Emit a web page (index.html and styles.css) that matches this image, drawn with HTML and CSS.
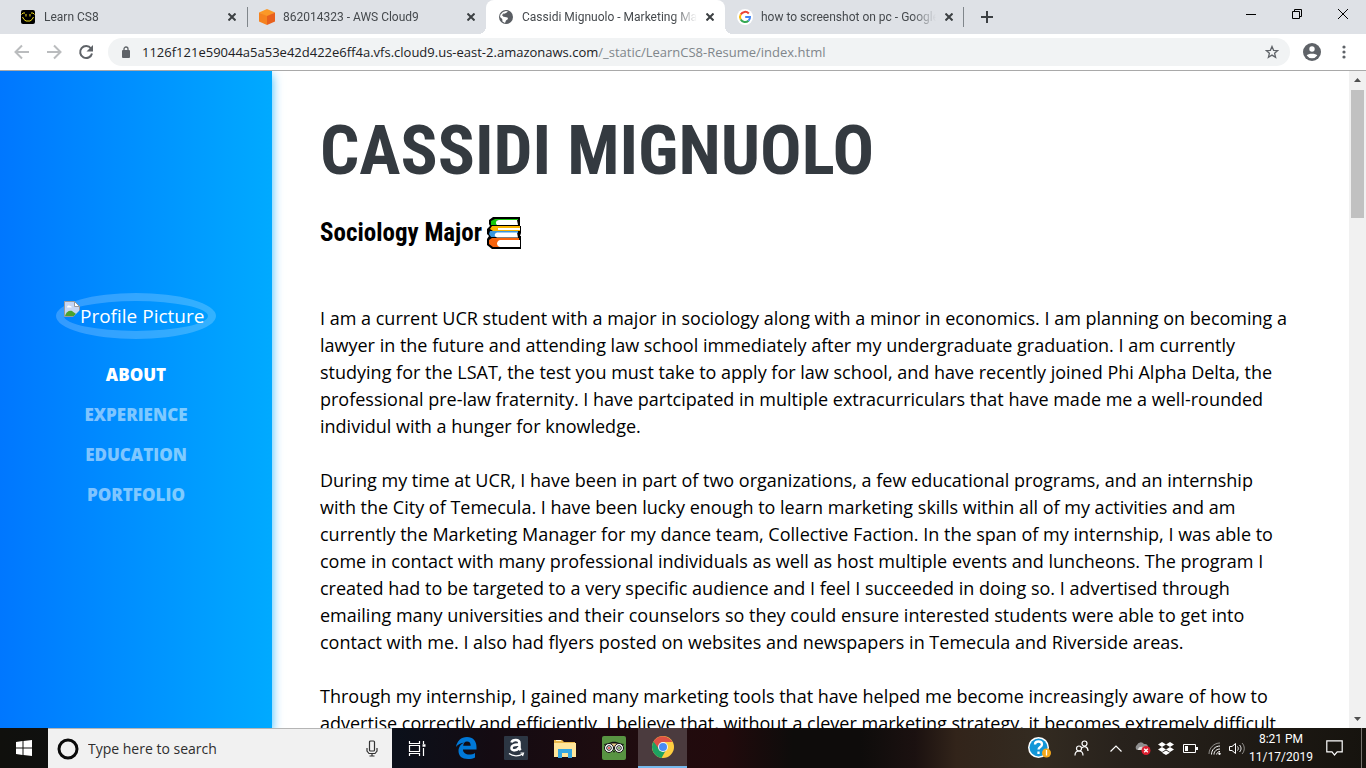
FILE: index.html
```html
<!DOCTYPE html>
<html lang="en">
<head>
<meta charset="utf-8">
<title>Cassidi Mignuolo - Marketing Manager</title>
<link rel="stylesheet" href="styles.css">
</head>
<body>
<header class="browser">
  <div class="tabstrip">
    <div class="tab">
      <svg class="favicon" viewBox="0 0 16 16"><rect x="1" y="1" width="14" height="14" rx="2" fill="#000"/><path d="M6 5v2.500M10 5v2.500M1.500 5.500L3 4h2M14.500 5.500L13 4h-2M2.500 8L4 10.500 6 12h4l2-1.500L13.500 8" fill="none" stroke="#f4e01c" stroke-width="1"/></svg>
      <a class="tab-title" href="#">Learn CS8</a>
      <button class="tab-close" aria-label="Close tab"><svg viewBox="0 0 8 8"><path d="M.5.500l7 7M7.500.500l-7 7"/></svg></button>
    </div>
    <div class="tab divided">
      <svg class="favicon" viewBox="0 0 16 16"><path d="M8 0l8 3.500L8 8 0 3.500z" fill="#fb9827"/><path d="M0 3.500L8 7v9l-8-3.500z" fill="#f5821f"/><path d="M16 3.500L8 7v9l8-3.500z" fill="#e8601d"/></svg>
      <a class="tab-title" href="#">862014323 - AWS Cloud9</a>
      <button class="tab-close" aria-label="Close tab"><svg viewBox="0 0 8 8"><path d="M.5.500l7 7M7.500.500l-7 7"/></svg></button>
    </div>
    <div class="tab active">
      <svg class="favicon" viewBox="0 0 16 16"><circle cx="8" cy="8" r="7" fill="#5a5e63"/><path d="M10 2.500L8 4 5.500 5l-1 1.800L7 8l2.500.5L10 10l-2 1.500L7 14 4.500 12.500 4.200 10 2 8l.5-2.500L5 3l3-1z" fill="#fff"/><path d="M7.500 5.500l2-.5 1-2 2.500 2 .8 3-1.800.7-1.500-1.500L8 7z" fill="#5a5e63"/><path d="M6 4.500C4 6 4.500 7 6.500 7.500" fill="none" stroke="#5a5e63"/></svg>
      <a class="tab-title" href="#">Cassidi Mignuolo - Marketing Manager</a>
      <button class="tab-close" aria-label="Close tab"><svg viewBox="0 0 8 8"><path d="M.5.500l7 7M7.500.500l-7 7"/></svg></button>
    </div>
    <div class="tab last">
      <svg class="favicon" viewBox="0 0 16 16"><circle cx="8" cy="8" r="8" fill="#fff"/><g fill="none" stroke-width="2"><path d="M11.800 4.500A5 5 0 0 0 3.700 5.500" stroke="#ea4335"/><path d="M3.700 5.500a5 5 0 0 0 0 5" stroke="#fbbc05"/><path d="M3.700 10.500a5 5 0 0 0 7.800 1.200" stroke="#34a853"/><path d="M11.500 11.700A4.800 4.800 0 0 0 13 8H8.200" stroke="#4285f4"/></g></svg>
      <a class="tab-title" href="#">how to screenshot on pc - Google Search</a>
      <button class="tab-close" aria-label="Close tab"><svg viewBox="0 0 8 8"><path d="M.5.500l7 7M7.500.500l-7 7"/></svg></button>
    </div>
    <button class="new-tab" aria-label="New tab"><svg width="12" height="12" viewBox="0 0 12 12"><path d="M6 0v12M0 6h12" stroke="#3c4043" stroke-width="2"/></svg></button>
    <div class="window-buttons">
      <button aria-label="Minimize"><svg width="10" height="10" viewBox="0 0 10 10"><path d="M0 5.500h10"/></svg></button>
      <button aria-label="Restore"><svg width="10" height="10" viewBox="0 0 10 10"><path d="M.5 2.500h7v7h-7zM2.500 2.500v-2h7v7h-2"/></svg></button>
      <button aria-label="Close window"><svg width="10" height="10" viewBox="0 0 10 10"><path d="M0 0l10 10M10 0L0 10"/></svg></button>
    </div>
  </div>
  <div class="toolbar">
    <button class="tool" aria-label="Back"><svg width="16" height="16" viewBox="0 0 16 16"><path d="M15 8H2M8 1.500L1.500 8 8 14.500" fill="none" stroke="#babcbe" stroke-width="2"/></svg></button>
    <button class="tool" aria-label="Forward"><svg width="16" height="16" viewBox="0 0 16 16"><path d="M1 8h13M8 1.500L14.500 8 8 14.500" fill="none" stroke="#babcbe" stroke-width="2"/></svg></button>
    <button class="tool" aria-label="Reload"><svg width="16" height="16" viewBox="0 0 16 16"><path d="M13 4.500A6 6 0 1 0 14 9.500" fill="none" stroke="#5f6368" stroke-width="2"/><path d="M15 1v6.500H8.500z" fill="#5f6368"/></svg></button>
    <div class="omnibox">
      <svg width="10" height="12" viewBox="0 0 10 12"><rect x="1" y="4" width="8" height="8" rx="1" fill="#5f6368"/><path d="M3 5V3a2 2 0 0 1 4 0v2" fill="none" stroke="#5f6368" stroke-width="1.300"/></svg>
      <div class="url">1126f121e59044a5a53e42d422e6ff4a.vfs.cloud9.us-east-2.amazonaws.com<span class="path">/_static/LearnCS8-Resume/index.html</span></div>
      <button class="star" aria-label="Bookmark this page"><svg width="14" height="14" viewBox="0 0 14 14"><path d="M7 1.500l1.600 3.800 4.100.3-3.100 2.700 1 4L7 10.100l-3.600 2.200 1-4L1.300 5.600l4.100-.3z" fill="none" stroke="#5f6368" stroke-width="1.300"/></svg></button>
    </div>
    <button class="tool profile" aria-label="Profile"><svg width="18" height="18" viewBox="0 0 18 18"><circle cx="9" cy="9" r="9" fill="#5f6368"/><circle cx="9" cy="6" r="2.700" fill="#fff"/><path d="M3.700 12.500c1-2.200 9.600-2.200 10.600 0a6.500 6.500 0 0 1-10.600 0z" fill="#fff"/></svg></button>
    <button class="tool" aria-label="Menu"><svg width="4" height="14" viewBox="0 0 4 14" fill="#5f6368"><circle cx="2" cy="2" r="1.600"/><circle cx="2" cy="7" r="1.600"/><circle cx="2" cy="12" r="1.600"/></svg></button>
  </div>
</header>

<div class="page">
  <nav class="sidebar">
    <div class="portrait">
      <svg width="16" height="16" viewBox="0 0 16 16"><path d="M.5.500h10l5 5v5.500l-5 4.500H.5z" fill="#c5d6f5" stroke="#9a9a9a"/><path d="M10.500.500v5h5z" fill="#fff" stroke="#9a9a9a"/><path d="M3 6.500c0-2 2-2.500 3-1.500 1.500-.5 2 1 1.500 1.500z" fill="#fff"/><path d="M1 15c1-4 4-6 7-5l4 3-2 2z" fill="#4ca32f"/><path d="M9 16l7-7v7z" fill="#0089ff"/></svg><span>Profile Picture</span>
    </div>
    <ul class="menu">
      <li><a class="current" href="#about">About</a></li>
      <li><a href="#experience">Experience</a></li>
      <li><a href="#education">Education</a></li>
      <li><a href="#portfolio">Portfolio</a></li>
    </ul>
  </nav>
  <main class="content" id="about">
    <h1>Cassidi Mignuolo</h1>
    <h2><span>Sociology Major</span>
      <svg width="36" height="34" viewBox="0 0 36 34"><path d="M7 1h27v9h1v7l-1 3h1v13H6l-5-4v-6l2-3-2-2v-5l3-3-1-2V4z" fill="#000"/><path d="M9 3h23v1H11v5h-6V5z" fill="#16c60c"/><path d="M13 4h18l1 5H11c-2-2-1-5 2-5z" fill="#fff"/><path d="M6 10h28v2H12v2h22v1H7l-3-2z" fill="#fab400"/><path d="M12 12h22v2H12z" fill="#fff"/><path d="M4 15h28v2H11v4H5l-2-3z" fill="#3a96dd"/><path d="M11 16.500h20l1 5H11c-3-1-3-4 0-5z" fill="#fff"/><path d="M6 22h27v2H14v7H7l-4-3v-4z" fill="#f7630c"/><path d="M14 24h20v7H14c-4-1-4-6 0-7z" fill="#fff"/></svg>
    </h2>
    <p>I am a current UCR student with a major in sociology along with a minor in economics. I am planning on becoming a<br>lawyer in the future and attending law school immediately after my undergraduate graduation. I am currently<br>studying for the LSAT, the test you must take to apply for law school, and have recently joined Phi Alpha Delta, the<br>professional pre-law fraternity. I have partcipated in multiple extracurriculars that have made me a well-rounded<br>individul with a hunger for knowledge.</p>
    <p>During my time at UCR, I have been in part of two organizations, a few educational programs, and an internship<br>with the City of Temecula. I have been lucky enough to learn marketing skills within all of my activities and am<br>currently the Marketing Manager for my dance team, Collective Faction. In the span of my internship, I was able to<br>come in contact with many professional individuals as well as host multiple events and luncheons. The program I<br>created had to be targeted to a very specific audience and I feel I succeeded in doing so. I advertised through<br>emailing many universities and their counselors so they could ensure interested students were able to get into<br>contact with me. I also had flyers posted on websites and newspapers in Temecula and Riverside areas.</p>
    <p>Through my internship, I gained many marketing tools that have helped me become increasingly aware of how to<br>advertise correctly and efficiently. I believe that, without a clever marketing strategy, it becomes extremely difficult</p>
  </main>
  <div class="scrollbar">
    <svg width="17" height="17" viewBox="0 0 17 17"><path d="M5 11l3.500-4L12 11z" fill="#505050"/></svg>
    <div class="thumb"></div>
    <svg width="17" height="17" viewBox="0 0 17 17"><path d="M5 6l3.500 4L12 6z" fill="#505050"/></svg>
  </div>
</div>

<footer class="taskbar">
  <button class="start" aria-label="Start"><svg width="16" height="16" viewBox="0 0 16 16" fill="#fff"><path d="M0 2l6.500-1v6.500H0zM7.500.900L16 0v7.500H7.500zM0 8.500h6.500V15L0 14zM7.500 8.500H16V16l-8.500-1z"/></svg></button>
  <label class="search">
    <svg width="22" height="22" viewBox="0 0 22 22"><circle cx="11" cy="11" r="9" fill="none" stroke="#0a0a0a" stroke-width="3"/></svg>
    <input type="text" placeholder="Type here to search" aria-label="Type here to search">
    <svg width="12" height="17" viewBox="0 0 12 17" fill="none" stroke="#333" stroke-width="1.200"><rect x="3.500" y="1" width="5" height="10" rx="1"/><path d="M1 8v3l2 2.500h6l2-2.500V8M6 13.500V16M3.500 16h5"/></svg>
  </label>
  <button class="app view" aria-label="Task View"><svg width="18" height="18" viewBox="0 0 18 18" fill="none" stroke="#fff" stroke-width="1.200"><path d="M1.500 2v2.500h10V2M1.500 6.500h10v6h-10zM1.500 17v-2.500h10V17M15.500 2v3M15.500 9v8"/><path d="M14.500 6.500h3" stroke-width="2.500"/></svg></button>
  <button class="app" aria-label="Edge"><svg width="21" height="22" viewBox="0 0 21 22"><path d="M0 10C1 4 5 0 11 0c6 0 9.500 4 9.500 10v2.500H7c0 3.500 3 5 6 5 2.500 0 4.500-.6 6-1.600v4.600c-2 1-4 1.500-7 1.500-6 0-9.500-3-9.500-8C2.500 10 5 7 8 5.500 4 6 1.500 8 0 10zM7.200 8.800h7.500C14.700 6 13.500 4.500 11 4.500S7.500 6.300 7.200 8.800z" fill="#0078d7"/></svg></button>
  <button class="app" aria-label="Amazon"><svg width="24" height="24" viewBox="0 0 24 24"><rect width="24" height="24" rx="1" fill="#2c3643"/><path d="M7.500 6.500C8 4.500 10 4 11.800 4c2.700 0 3.700 1.200 3.700 3.300v4.200c0 1.500.5 2 1.200 2.700M15 8.700c-5-.3-7.500 1-7.500 3.300 0 3.300 5.500 3 7.300-.3" fill="none" stroke="#fff" stroke-width="2.600"/><path d="M5 17.500c4 3 10 3 13.500.5M16.500 17h3l-1 3" fill="none" stroke="#fff" stroke-width="1.200"/></svg></button>
  <button class="app" aria-label="File Explorer"><svg width="22" height="19" viewBox="0 0 22 19"><path d="M0 1h8l2 2h11v15H0z" fill="#e9b84c"/><path d="M2 1h5v1H2z" fill="#fff5cf"/><path d="M0 4h22v14H0z" fill="#ffe69a"/><path d="M4 19v-9h14v9h-4v-5H8v5z" fill="#35a7df"/></svg></button>
  <button class="app" aria-label="TripAdvisor"><svg width="24" height="24" viewBox="0 0 24 24"><rect width="24" height="24" rx="2" fill="#589442"/><path d="M2 8l4-.5C10 5 14 5 18 7.500l4 .5-2 3H4z" fill="#111"/><path d="M9 7.500h6L12 12z" fill="#eac98a"/><g fill="#fff" stroke="#111"><circle cx="7" cy="12" r="4.500"/><circle cx="17" cy="12" r="4.500"/><circle cx="7" cy="12" r="2.300"/><circle cx="17" cy="12" r="2.300"/></g><circle cx="7" cy="12" r="1" fill="#d33"/><circle cx="17" cy="12" r="1" fill="#589442"/><path d="M11 15h2l-1 2z" fill="#111"/></svg></button>
  <button class="app open" aria-label="Chrome"><svg width="22" height="22" viewBox="0 0 22 22"><circle cx="11" cy="11" r="11" fill="#ffcd40"/><path d="M11 11L1.500 5.500A11 11 0 0 0 9.500 21.900L14 14z" fill="#1da261"/><path d="M1.500 5.500a11 11 0 0 1 19 0.500H11L7 13z" fill="#dd5144"/><circle cx="11" cy="11" r="5" fill="#f4f4f4"/><circle cx="11" cy="11" r="4" fill="#4a8af4"/></svg></button>
  <div class="tray">
    <button class="help" aria-label="Help"><svg width="24" height="22" viewBox="0 0 24 22"><circle cx="10.500" cy="10.500" r="10.500" fill="#fff"/><circle cx="10.500" cy="10.500" r="9" fill="#1296d8"/><path d="M7 7.500C7 3.500 14 3.500 14 7.500c0 2.500-3.500 2.500-3.500 5M10.500 14.500v2.500" fill="none" stroke="#fff" stroke-width="2.300"/><circle cx="18.500" cy="16" r="4.500" fill="#f5a81c"/><path d="M18.500 13v5.500" stroke="#fff" stroke-width="1.300"/></svg></button>
    <button class="people" aria-label="People"><svg width="15" height="16" viewBox="0 0 15 16" fill="none" stroke="#fff" stroke-width="1.200"><circle cx="5" cy="8.500" r="2.500"/><path d="M1 15.500c0-6 8-6 8 0"/><circle cx="10.500" cy="3.500" r="2.500"/><path d="M8 8c2-2.500 6-1.500 6 3"/></svg></button>
    <button class="more" aria-label="Show hidden icons"><svg width="12" height="7" viewBox="0 0 12 7"><path d="M.5 6.500L6 1l5.500 5.500" fill="none" stroke="#fff" stroke-width="1.200"/></svg></button>
    <button aria-label="OneDrive"><svg width="17" height="14" viewBox="0 0 17 14"><path d="M3 9a3 3 0 0 1 0-5 4 4 0 0 1 7-1c3-.5 4 1 4 3v3z" fill="#8e8e8e"/><path d="M4 9c0-3 3-4 5-3 3-1 5 1 5 3z" fill="#ddd"/><circle cx="12" cy="9.500" r="4.500" fill="#dc1f30"/><path d="M10.200 7.700l3.600 3.600M13.800 7.700l-3.600 3.600" stroke="#fff" stroke-width="1.300"/></svg></button>
    <button aria-label="Dropbox"><svg width="16" height="13" viewBox="0 0 16 13" fill="#fff"><path d="M4 0l4 2.500L4 5 0 2.500zM12 0l4 2.500L12 5 8 2.500zM4 5l4 2.500L4 10 0 7.500zM12 5l4 2.500-4 2.500-4-2.500zM8 8.500l4 2.300L8 13l-4-2.200z"/></svg></button>
    <button aria-label="Battery"><svg width="15" height="9" viewBox="0 0 15 9"><path d="M.5.500h12v8H.5z" fill="none" stroke="#fff"/><path d="M13 3h2v3h-2zM2 2h3v5H2z" fill="#fff"/></svg></button>
    <button aria-label="Network"><svg width="13" height="13" viewBox="0 0 13 13" fill="none" stroke="#fff"><path d="M1 12C1 6 6 1 12 1" opacity=".5"/><path d="M3.500 12.500c0-5 4-8.500 8.500-8.500M6 12.500C6 9 9 7 12 7M8.700 12.500c0-1.500 1.500-3 3.300-3"/><circle cx="11.500" cy="11.800" r=".8" fill="#fff"/></svg></button>
    <button class="sound" aria-label="Volume"><svg width="17" height="13" viewBox="0 0 17 13" fill="none" stroke="#fff"><path d="M.5 4.500H3L6.500 1.500v10L3 8.500H.5zM8.500 4.500c1 1 1 3 0 4M10.500 3c2 2 2 5 0 7"/><path d="M13 1c3 3 3 8 0 11" opacity=".5"/></svg></button>
    <div class="clock"><span>8:21 PM</span><span>11/17/2019</span></div>
    <button class="notify" aria-label="Notifications"><svg width="17" height="16" viewBox="0 0 17 16"><path d="M.8.800h15.400v11h-5L8.500 15l-2.500-3.200H.8z" fill="none" stroke="#fff" stroke-width="1.200"/></svg></button>
    <button class="desktop" aria-label="Show desktop"></button>
  </div>
</footer>
</body>
</html>
```

FILE: styles.css
```css
* { box-sizing: border-box; }
body {
  margin: 0;
  height: 100vh;
  display: flex;
  flex-direction: column;
  overflow: hidden;
  font-family: Roboto, "Open Sans", sans-serif;
  font-size: 12px;
}
button {
  display: flex;
  align-items: center;
  justify-content: center;
  padding: 0;
  border: 0;
  background: none;
}
svg { display: block; flex: none; }
a { color: inherit; text-decoration: none; }

.browser { flex: none; border-bottom: 1px solid #a9a9a9; background: #fff; }
.tabstrip { display: flex; height: 34px; padding-left: 8px; background: #dee1e6; }
.tab {
  flex: 0 1 239px;
  min-width: 0;
  display: flex;
  align-items: center;
  padding: 0 11px 0 12px;
  color: #45494d;
  position: relative;
}
.divided::before, .last::after {
  content: "";
  position: absolute;
  left: 0;
  top: 7px;
  width: 1px;
  height: 20px;
  background: #80868b;
}
.last::after { left: auto; right: 0; }
.favicon { width: 16px; height: 16px; margin-right: 8px; }
.tab-title {
  flex: 1;
  min-width: 0;
  overflow: hidden;
  white-space: nowrap;
  -webkit-mask-image: linear-gradient(to right, #000 calc(100% - 24px), transparent);
  mask-image: linear-gradient(to right, #000 calc(100% - 24px), transparent);
}
.tab-close { width: 8px; height: 8px; margin-left: 9px; }
.tab-close svg { width: 8px; height: 8px; stroke: #3c4043; stroke-width: 2; }
.active { background: #fff; border-radius: 8px 8px 0 0; }
.active::before, .active::after {
  content: "";
  position: absolute;
  bottom: 0;
  width: 8px;
  height: 8px;
}
.active::before { left: -8px; background: radial-gradient(circle at 0 0, transparent 8px, #fff 8px); }
.active::after { right: -8px; background: radial-gradient(circle at 100% 0, transparent 8px, #fff 8px); }
.new-tab { width: 28px; margin-left: 9px; }
.window-buttons { display: flex; margin-left: auto; height: 28px; }
.window-buttons button { width: 46px; }
.window-buttons svg { fill: none; stroke: #000; }

.toolbar { display: flex; align-items: center; height: 36px; padding: 0 6px; }
.tool { width: 32px; height: 32px; }
.profile { margin-left: 6px; }
.omnibox {
  flex: 1;
  min-width: 0;
  display: flex;
  align-items: center;
  height: 28px;
  margin-left: 6px;
  padding: 0 11px 0 13px;
  border-radius: 14px;
  background: #f1f3f4;
}
.url {
  flex: 1;
  margin-left: 11px;
  font-family: "Open Sans", sans-serif;
  font-size: 13px;
  white-space: nowrap;
  overflow: hidden;
  color: #202124;
}
.path { color: #80868b; }

.page { flex: 1; min-height: 0; display: flex; background: #fff; overflow: hidden; }
.sidebar {
  flex: none;
  width: 272px;
  display: flex;
  flex-direction: column;
  align-items: center;
  justify-content: center;
  gap: 16px;
  padding-top: 8px;
  background: linear-gradient(to right, #0077ff, #00aaff);
  box-shadow: 0 4px 10px #00aaffcc;
  color: #fff;
  font-family: "Open Sans", sans-serif;
}
.portrait {
  display: flex;
  width: 160px;
  height: 46px;
  border: 8px solid rgba(255, 255, 255, 0.2);
  border-radius: 50%;
  font-size: 19px;
  line-height: 30px;
  white-space: nowrap;
}
.menu { margin: 0; padding: 0; list-style: none; text-align: center; }
.menu a {
  display: block;
  font-size: 17px;
  line-height: 24px;
  padding: 8px;
  font-weight: 800;
  text-transform: uppercase;
  color: rgba(255, 255, 255, 0.5);
}
.menu .current { color: #fff; }

.content {
  flex: 1;
  min-width: 0;
  overflow: hidden;
  padding: 32px 48px 0;
  font-family: "Open Sans", sans-serif;
  font-size: 18px;
  line-height: 27px;
  color: #000;
}
h1, h2 { margin: 0; font-family: "Roboto Condensed", "Open Sans Condensed", "Noto Sans Condensed", Roboto, sans-serif; white-space: nowrap; }
h1 { font-size: 69px; line-height: 96px; text-transform: uppercase; color: #343a40; }
h2 { display: flex; align-items: center; gap: 4px; margin: 16px 0 54px; font-size: 25px; line-height: 36px; }
p { margin: 0 0 27px; white-space: nowrap; }

.scrollbar { flex: none; width: 17px; display: flex; flex-direction: column; background: #f1f1f1; }
.thumb { height: 128px; margin: 2px 2px auto; background: #c1c1c1; }

.taskbar {
  flex: none;
  display: flex;
  height: 40px;
  background: linear-gradient(to right, #10100d 0, #0b101a 29%, #140b12 36%, #200c0f 47%, #220a0c 53%, #0e0c0b 58%, #0e0c0b 63%, #1b1110 67%, #32241a 70%, #332b21 76%, #28221c 82%, #16130e 100%);
}
.start { width: 48px; }
.search {
  width: 344px;
  display: flex;
  align-items: center;
  padding: 0 14px 0 9px;
  border-top: 1px solid #b5b5b5;
  background: #f1f1f1;
}
.search input {
  flex: 1;
  min-width: 0;
  padding: 0 0 0 9px;
  border: 0;
  outline: 0;
  background: none;
  font: 14px "Open Sans", "Noto Sans", sans-serif;
}
.search input::placeholder { color: #2e2e2e; opacity: 1; }
.app { width: 49px; }
.view { width: 50px; }
.open { background: #4b3b3e; border-bottom: 2px solid #76b9ed; }
.tray { display: flex; margin-left: auto; color: #fff; }
.tray button { width: 24px; }
.tray .help { width: 40px; }
.tray .people { width: 42px; }
.tray .more { width: 28px; }
.tray .sound { width: 22px; }
.clock { width: 66px; display: flex; flex-direction: column; align-items: center; padding-top: 2px; line-height: 18px; }
.tray .notify { width: 40px; }
.tray .desktop { width: 5px; margin-left: 7px; border-left: 1px solid #77736e; }
```
